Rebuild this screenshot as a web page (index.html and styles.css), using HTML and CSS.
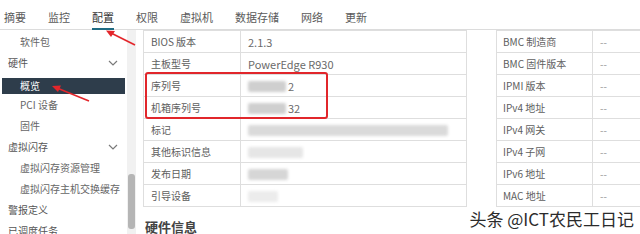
FILE: index.html
```html
<!DOCTYPE html>
<html lang="zh-CN">
<head>
<meta charset="utf-8">
<link rel="stylesheet" href="styles.css">
</head>
<body>
<div class="page">
  <nav class="tabs">
    <span class="tab">摘要</span>
    <span class="tab">监控</span>
    <span class="tab active">配置</span>
    <span class="tab">权限</span>
    <span class="tab">虚拟机</span>
    <span class="tab">数据存储</span>
    <span class="tab">网络</span>
    <span class="tab">更新</span>
  </nav>
  <div class="content">
    <aside class="sidebar">
      <ul class="menu">
        <li class="item sub">软件包</li>
        <li class="item group">硬件<svg class="chev" width="10" height="6" viewBox="0 0 10 6"><path d="M1 1 L5 5 L9 1" fill="none" stroke="#7a7a7a" stroke-width="1.2"/></svg></li>
        <li class="item sub active">概览</li>
        <li class="item sub">PCI 设备</li>
        <li class="item sub">固件</li>
        <li class="item group">虚拟闪存<svg class="chev" width="10" height="6" viewBox="0 0 10 6"><path d="M1 1 L5 5 L9 1" fill="none" stroke="#7a7a7a" stroke-width="1.2"/></svg></li>
        <li class="item sub">虚拟闪存资源管理</li>
        <li class="item sub">虚拟闪存主机交换缓存</li>
        <li class="item group">警报定义</li>
        <li class="item group">已调度任务</li>
      </ul>
      <div class="scroll"><div class="thumb"></div></div>
    </aside>
    <main class="main">
      <div class="tables">
        <table class="grid left">
          <tr><td class="k">BIOS 版本</td><td class="v">2.1.3</td></tr>
          <tr><td class="k">主板型号</td><td class="v">PowerEdge R930</td></tr>
          <tr><td class="k">序列号</td><td class="v"><span class="blur b1"></span>2</td></tr>
          <tr><td class="k">机箱序列号</td><td class="v"><span class="blur b1"></span>32</td></tr>
          <tr><td class="k">标记</td><td class="v"><span class="blur b2"></span></td></tr>
          <tr><td class="k">其他标识信息</td><td class="v"><span class="blur b3"></span></td></tr>
          <tr><td class="k">发布日期</td><td class="v"><span class="blur b4"></span></td></tr>
          <tr><td class="k">引导设备</td><td class="v"><span class="blur b5"></span></td></tr>
        </table>
        <table class="grid right">
          <tr><td class="k">BMC 制造商</td><td class="v dash">--</td></tr>
          <tr><td class="k">BMC 固件版本</td><td class="v dash">--</td></tr>
          <tr><td class="k">IPMI 版本</td><td class="v dash">--</td></tr>
          <tr><td class="k">IPv4 地址</td><td class="v dash">--</td></tr>
          <tr><td class="k">IPv4 网关</td><td class="v dash">--</td></tr>
          <tr><td class="k">IPv4 子网</td><td class="v dash">--</td></tr>
          <tr><td class="k">IPv6 地址</td><td class="v dash">--</td></tr>
          <tr><td class="k">MAC 地址</td><td class="v dash">--</td></tr>
        </table>
      </div>
      <h3 class="heading">硬件信息</h3>
    </main>
  </div>
  <div class="redbox"></div>
  <svg class="arrows" width="640" height="234" viewBox="0 0 640 234">
    <line x1="135" y1="45" x2="111" y2="33" stroke="#e3262b" stroke-width="1.6"/>
    <polygon points="106,30.5 115,31 111,37" fill="#e3262b"/>
    <line x1="89" y1="101" x2="57" y2="88" stroke="#e3262b" stroke-width="1.6"/>
    <polygon points="52,86 61,85.5 58,92" fill="#e3262b"/>
  </svg>
  <div class="watermark">头条 @ICT农民工日记</div>
</div>
</body>
</html>
```

FILE: styles.css
```css
* { box-sizing: border-box; }
html, body { margin: 0; padding: 0; background: #fff; }
body {
  font-family: "Noto Sans CJK SC", "Noto Sans", sans-serif;
  font-size: 10px;
  color: #5e5e5e;
  width: 640px;
  height: 234px;
  overflow: hidden;
}
.page { position: relative; width: 640px; height: 234px; overflow: hidden; }

.tabs {
  display: flex;
  gap: 22px;
  height: 30px;
  padding-left: 4px;
  border-bottom: 1px solid #dcdcdc;
  font-size: 11px;
}
.tab {
  height: 30px;
  display: flex;
  align-items: center;
  padding-top: 4px;
  color: #5a5a5a;
  white-space: nowrap;
}
.tab.active {
  color: #333;
  border-bottom: 2px solid #1f6b83;
  margin-bottom: -1px;
  padding-top: 5px;
}

.content { display: flex; height: 204px; }

.sidebar { display: flex; width: 143px; flex: none; }
.menu { list-style: none; margin: 0; padding: 1px 0 0; width: 127px; }
.item { height: 21px; line-height: 21px; white-space: nowrap; position: relative; }
.item.group { padding-left: 8px; color: #555; }
.item.sub { padding-left: 20px; color: #666; }
.item.active {
  height: 16px;
  line-height: 16px;
  margin: 5px 0 0 2px;
  width: 123px;
  padding-left: 18px;
  background: #2e3d4b;
  color: #fff;
}
.chev { position: absolute; left: 108px; top: 8px; }
.scroll { width: 9px; background: #f1f1f1; position: relative; }
.thumb {
  position: absolute; left: 1px; width: 7px;
  top: 144px; height: 55px;
  background: #b5b5b5; border-radius: 3px;
}

.main { flex: 1; }
.tables { display: flex; gap: 29px; align-items: flex-start; }
.grid { border-collapse: collapse; }
.grid td {
  height: 22px;
  padding: 0 0 0 7px;
  border: 1px solid #dedede;
  white-space: nowrap;
  vertical-align: middle;
}
.left { width: 324px; }
.left .k { width: 97px; }
.right { width: 150px; }
.right .k { width: 96px; padding-left: 6px; }
.v { color: #6a6a6a; font-size: 11px; }
.dash { color: #999; font-size: 10px; }

.blur {
  display: inline-block;
  height: 11px;
  vertical-align: -1px;
  background: #cfcfcf;
  filter: blur(1.5px);
  border-radius: 2px;
}
.b1 { width: 38px; margin-right: 2px; }
.b2 { width: 200px; background: #dadada; }
.b3 { width: 55px; background: #e6e6e6; }
.b4 { width: 40px; background: #d6d6d6; }
.b5 { width: 30px; background: #ececec; }

.heading {
  margin: 10px 0 0 2px;
  font-size: 13px;
  font-weight: bold;
  color: #444;
}

.redbox {
  position: absolute;
  left: 145px; top: 72px;
  width: 183px; height: 47px;
  border: 2px solid #e1262b;
  border-radius: 3px;
}
.arrows { position: absolute; left: 0; top: 0; }
.watermark {
  position: absolute;
  right: 6px; bottom: 3px;
  font-size: 17px;
  color: #2b2b2b;
  text-shadow: 0 0 2px #fff, 0 0 2px #fff;
  white-space: nowrap;
}
```
